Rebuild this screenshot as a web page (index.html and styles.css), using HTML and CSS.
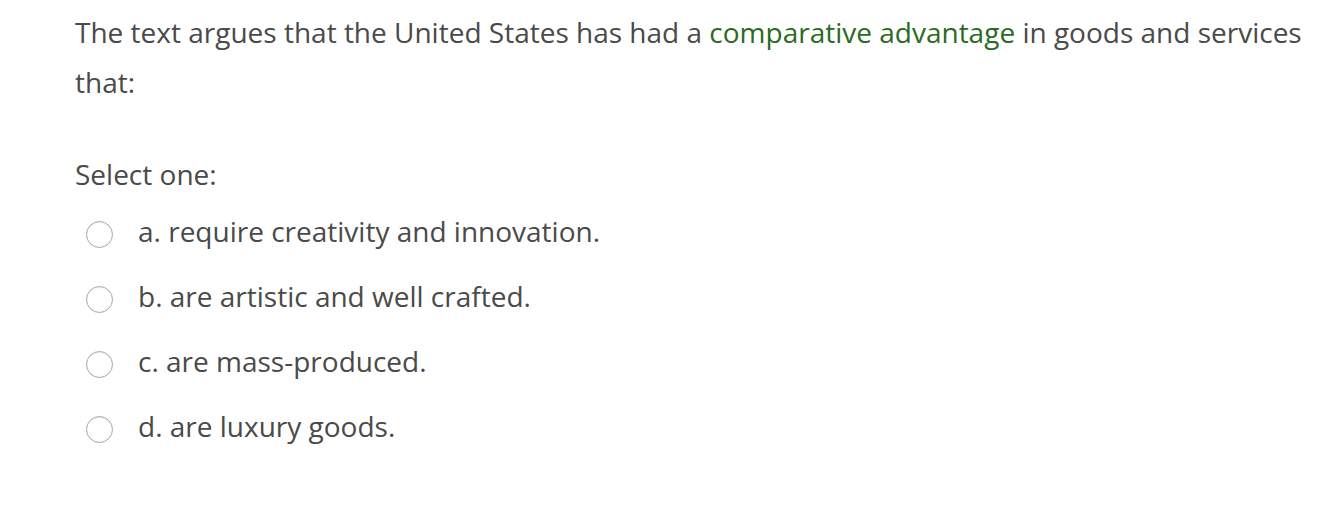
FILE: index.html
```html
<!DOCTYPE html>
<html>
<head>
<meta charset="utf-8">
<link rel="stylesheet" href="styles.css">
</head>
<body>
<div class="que">
  <div class="qtext">The text argues that the United States has had a <a class="gloss" href="#">comparative advantage</a> in goods and services that:</div>
  <div class="prompt">Select one:</div>
  <div class="answers">
    <div class="opt"><span class="radio"></span><span class="label">a. require creativity and innovation.</span></div>
    <div class="opt"><span class="radio"></span><span class="label">b. are artistic and well crafted.</span></div>
    <div class="opt"><span class="radio"></span><span class="label">c. are mass-produced.</span></div>
    <div class="opt"><span class="radio"></span><span class="label">d. are luxury goods.</span></div>
  </div>
</div>
</body>
</html>
```
FILE: styles.css
```css
html, body {
  margin: 0;
  padding: 0;
  background: #ffffff;
}
body {
  font-family: "Open Sans", "Liberation Sans", sans-serif;
  color: #4a4a4a;
  font-size: 28px;
}
.que {
  padding: 7px 20px 0 75px;
}
.qtext {
  line-height: 50px;
}
.gloss {
  color: #2c6a1f;
  text-decoration: none;
}
.prompt {
  margin-top: 42px;
  line-height: 50px;
}
.answers {
  display: flex;
  flex-direction: column;
  margin-top: -1px;
}
.opt {
  display: flex;
  align-items: center;
  height: 65px;
  padding-left: 11px;
}
.radio {
  width: 25px;
  height: 25px;
  border-radius: 50%;
  border: 1px solid #a8a8a8;
  background: radial-gradient(circle at 50% 40%, #ffffff 60%, #f0f0f0 100%);
  box-shadow: inset 0 1px 1px rgba(0,0,0,0.08);
  margin-top: 8px;
  flex: none;
}
.label {
  margin-left: 25px;
}
```
